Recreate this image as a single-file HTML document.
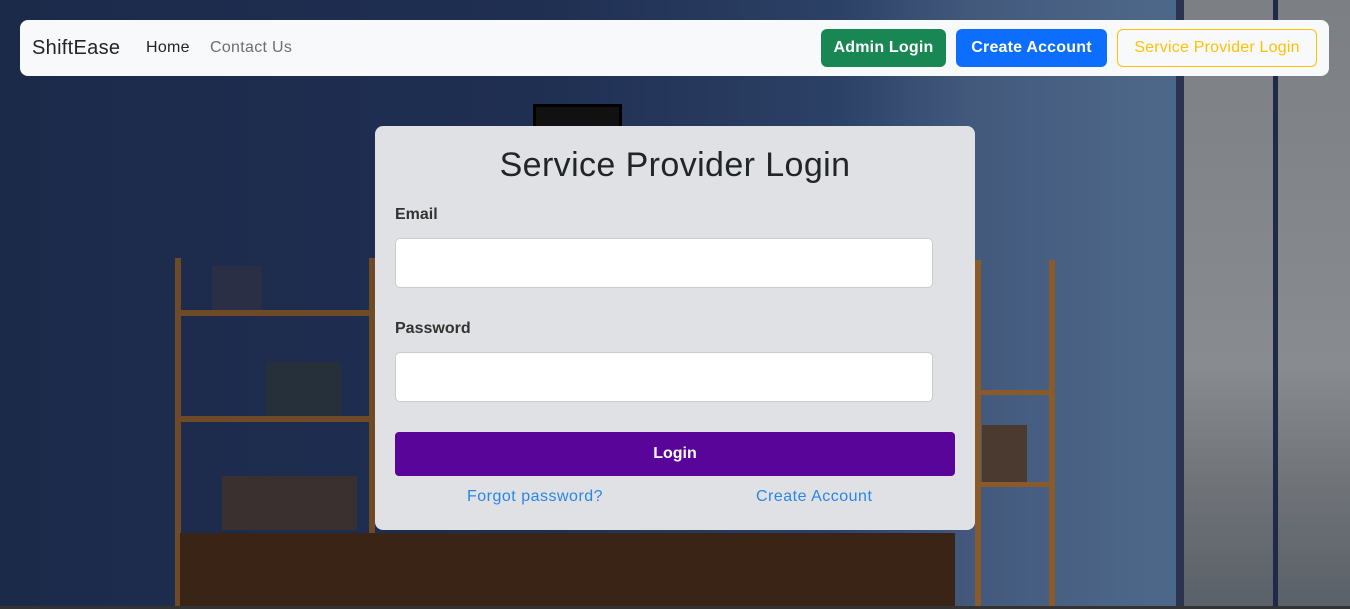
<!DOCTYPE html>
<html><head><meta charset="utf-8"><style>
*{box-sizing:border-box;margin:0;padding:0}
body{width:1350px;height:609px;overflow:hidden;font-family:"Liberation Sans",sans-serif;position:relative;
background:linear-gradient(90deg,#1c2a4a 0%,#1f2f52 40%,#2c4166 62%,#42597c 72%,#4d6789 85%,#4d6789 87%);}
.bg{position:absolute}
nav{position:absolute;left:20px;top:20px;width:1309px;height:56px;background:#f8f9fa;border-radius:8px}
.brand{position:absolute;left:12px;top:17px;font-size:20px;color:#212529;letter-spacing:0.3px}
.nl{position:absolute;top:19px;font-size:16px;letter-spacing:0.3px}
.btn{position:absolute;top:9px;height:38px;border-radius:6px;font-size:16px;line-height:38px;text-align:center;color:#fff;letter-spacing:0.2px;font-weight:600}
.card{position:absolute;left:375px;top:126px;width:600px;height:404px;background:#e0e1e4;border-radius:8px}
h1{position:absolute;top:20px;width:100%;text-align:center;font-weight:400;font-size:34px;color:#212529;letter-spacing:0.4px}
label{position:absolute;left:20px;font-size:16px;color:#333;font-weight:600}
.inp{position:absolute;left:20px;width:538px;height:50px;background:#fff;border:1px solid #ccc;border-radius:5px}
.login{position:absolute;left:20px;top:306px;width:560px;height:44px;background:#5a0599;border-radius:4px;color:#fff;text-align:center;line-height:44px;font-size:16px;font-weight:600}
.lk{position:absolute;top:362px;color:#2a86e6;font-size:16px;letter-spacing:0.5px}
</style></head><body>
<div class="bg" style="left:1178px;top:0;width:172px;height:609px;background:linear-gradient(180deg,#7c7f84 0%,#888b90 60%,#6f7378 80%,#5a6068 100%)"></div>
<div class="bg" style="left:1176px;top:0;width:8px;height:609px;background:#2a3350"></div>
<div class="bg" style="left:1273px;top:0;width:5px;height:609px;background:#1e2a48"></div>
<div class="bg" style="left:175px;top:258px;width:200px;height:351px;border-left:6px solid #6e4a26;border-right:6px solid #6e4a26"></div>
<div class="bg" style="left:175px;top:310px;width:200px;height:6px;background:#6e4a26"></div>
<div class="bg" style="left:175px;top:416px;width:200px;height:6px;background:#6e4a26"></div>
<div class="bg" style="left:212px;top:266px;width:50px;height:44px;background:#2a2f45"></div>
<div class="bg" style="left:266px;top:362px;width:75px;height:54px;background:#26303a"></div>
<div class="bg" style="left:222px;top:476px;width:135px;height:54px;background:#3a3030"></div>
<div class="bg" style="left:975px;top:260px;width:80px;height:349px;border-right:6px solid #8a5a2a;border-left:6px solid #8a5a2a"></div>
<div class="bg" style="left:975px;top:390px;width:80px;height:5px;background:#8a5a2a"></div>
<div class="bg" style="left:975px;top:482px;width:80px;height:5px;background:#8a5a2a"></div>
<div class="bg" style="left:982px;top:425px;width:45px;height:57px;background:#4a3a30"></div>
<div class="bg" style="left:180px;top:533px;width:775px;height:76px;background:#3a2416"></div>
<div class="bg" style="left:533px;top:104px;width:89px;height:30px;background:#111;border:3px solid #000"></div>
<div class="bg" style="left:0;top:606px;width:1350px;height:3px;background:#333"></div>
<nav>
<div class="brand">ShiftEase</div>
<div class="nl" style="left:126px;color:#212529">Home</div>
<div class="nl" style="left:190px;color:#6c6f73">Contact Us</div>
<div class="btn" style="left:801px;width:125px;background:#198754">Admin Login</div>
<div class="btn" style="left:936px;width:151px;background:#0d6efd">Create Account</div>
<div class="btn" style="left:1097px;width:200px;border:1px solid #ffc107;color:#ffc107;line-height:36px;font-weight:400">Service Provider Login</div>
</nav>
<div class="card">
<h1>Service Provider Login</h1>
<label style="top:80px">Email</label>
<div class="inp" style="top:112px"></div>
<label style="top:194px">Password</label>
<div class="inp" style="top:226px"></div>
<div class="login">Login</div>
<div class="lk" style="left:92px">Forgot password?</div>
<div class="lk" style="left:381px">Create Account</div>
</div>
</body></html>
